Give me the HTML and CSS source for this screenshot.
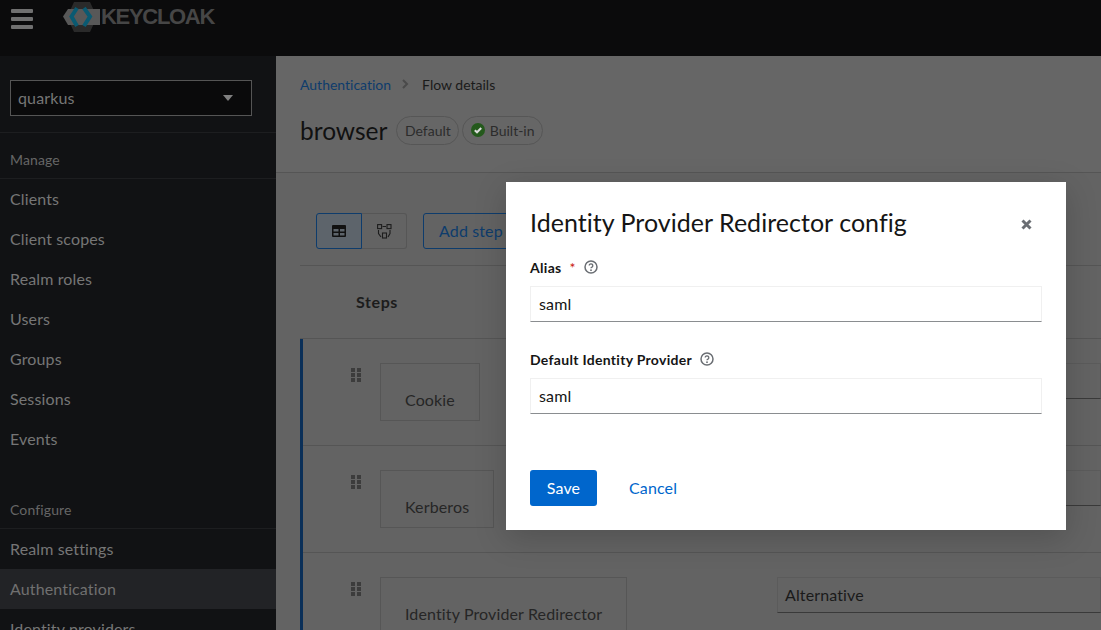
FILE: index.html
```html
<!DOCTYPE html>
<html lang="en">
<head>
<meta charset="utf-8">
<title>Keycloak</title>
<link rel="stylesheet" href="styles.css">
</head>
<body>
<div class="app">
  <header class="masthead">
    <div class="burger"><span></span><span></span><span></span></div>
    <div class="logo">
      <svg class="logo-mark" width="40" height="32" viewBox="0 0 40 32">
        <polygon points="4,16 11,1 27,1 34,16 27,31 11,31" fill="#2a2a2a"/>
        <polygon points="0,15.500 5,8 37,8 37,24 5,24" fill="#585858"/>
        <path d="M14 7 L8.500 15.500 L14 25 M21 7 L27 15.500 L21 25" fill="none" stroke="#0a5a72" stroke-width="4"/>
      </svg>
      <span class="logo-text">KEYCLOAK</span>
    </div>
  </header>
  <div class="body">
    <aside class="sidebar">
      <div class="realm-wrap">
        <div class="realm"><span>quarkus</span><i class="caret"></i></div>
      </div>
      <div class="group-title">Manage</div>
      <nav class="nav">
        <a>Clients</a><a>Client scopes</a><a>Realm roles</a><a>Users</a><a>Groups</a><a>Sessions</a><a>Events</a>
      </nav>
      <div class="group-title">Configure</div>
      <nav class="nav">
        <a>Realm settings</a><a class="current">Authentication</a><a>Identity providers</a>
      </nav>
    </aside>
    <main class="content">
      <section class="head">
        <div class="crumbs"><a>Authentication</a><svg class="chev" width="8" height="10" viewBox="0 0 8 10"><path d="M2 1 L6 5 L2 9" fill="none" stroke="#4a4a4a" stroke-width="2"/></svg><span>Flow details</span></div>
        <div class="title-row">
          <h1>browser</h1>
          <span class="pill">Default</span>
          <span class="pill"><svg width="14" height="14" viewBox="0 0 14 14"><circle cx="7" cy="7" r="7" fill="#24591c"/><path d="M3.800 7.200 L6 9.300 L10.200 5" fill="none" stroke="#dcdcdc" stroke-width="2"/></svg>Built-in</span>
        </div>
      </section>
      <section class="tools">
        <div class="toolbar">
          <div class="toggle">
            <button class="tg on"><svg width="14" height="12" viewBox="0 0 14 12"><path fill="#111" d="M1 0h12a1 1 0 0 1 1 1v10a1 1 0 0 1-1 1H1a1 1 0 0 1-1-1V1a1 1 0 0 1 1-1zm.500 4v2.500h5V4zm6.500 0v2.500h4.500V4zM1.500 8v2.500h5V8zM8 8v2.500h4.500V8z" fill-rule="evenodd"/></svg></button>
            <button class="tg"><svg width="15" height="15" viewBox="0 0 15 15"><g fill="none" stroke="#1d1d1d" stroke-width="1.100"><rect x=".6" y=".6" width="4" height="4"/><rect x="10" y=".6" width="4" height="4"/><rect x="5.500" y="9" width="4" height="5"/><path d="M5.500 2.500h3.500M1.500 6v3.500l2.500 3.500M13 6v3.500l-2 3.500"/></g></svg></button>
          </div>
          <button class="add">Add step</button>
        </div>
        <div class="table-head">Steps</div>
        <div class="rows">
          <div class="row">
            <svg class="grip" width="10" height="14" viewBox="0 0 10 14"><path fill="#3c3c3c" d="M0 0h4v4H0zM6 0h4v4H6zM0 5h4v4H0zM6 5h4v4H6zM0 10h4v4H0zM6 10h4v4H6z"/></svg>
            <div class="step">Cookie</div>
            <div class="req"></div>
          </div>
          <div class="row">
            <svg class="grip" width="10" height="14" viewBox="0 0 10 14"><path fill="#3c3c3c" d="M0 0h4v4H0zM6 0h4v4H6zM0 5h4v4H0zM6 5h4v4H6zM0 10h4v4H0zM6 10h4v4H6z"/></svg>
            <div class="step">Kerberos</div>
            <div class="req"></div>
          </div>
          <div class="row">
            <svg class="grip" width="10" height="14" viewBox="0 0 10 14"><path fill="#3c3c3c" d="M0 0h4v4H0zM6 0h4v4H6zM0 5h4v4H0zM6 5h4v4H6zM0 10h4v4H0zM6 10h4v4H6z"/></svg>
            <div class="step">Identity Provider Redirector</div>
            <div class="req">Alternative</div>
          </div>
        </div>
      </section>
    </main>
  </div>
  <div class="modal">
    <div class="modal-head">
      <h2>Identity Provider Redirector config</h2>
      <svg class="close" width="11" height="11" viewBox="0 0 11 11"><path d="M1.500 1.500 L9.500 9.500 M9.500 1.500 L1.500 9.500" stroke="#6a6e73" stroke-width="3"/></svg>
    </div>
    <div class="field">
      <div class="label"><b>Alias</b><em>*</em><svg class="help" width="14" height="14" viewBox="0 0 14 14"><circle cx="7" cy="7" r="6" fill="none" stroke="#6a6e73" stroke-width="1.500"/><path d="M5.200 5.600a1.800 1.700 0 1 1 2.700 1.500c-.6.300-.9.600-.9 1.200" fill="none" stroke="#6a6e73" stroke-width="1.300"/><circle cx="7" cy="10.200" r=".9" fill="#6a6e73"/></svg></div>
      <div class="input">saml</div>
    </div>
    <div class="field">
      <div class="label"><b>Default Identity Provider</b><svg class="help" width="14" height="14" viewBox="0 0 14 14"><circle cx="7" cy="7" r="6" fill="none" stroke="#6a6e73" stroke-width="1.500"/><path d="M5.200 5.600a1.800 1.700 0 1 1 2.700 1.500c-.6.300-.9.600-.9 1.200" fill="none" stroke="#6a6e73" stroke-width="1.300"/><circle cx="7" cy="10.200" r=".9" fill="#6a6e73"/></svg></div>
      <div class="input">saml</div>
    </div>
    <div class="actions">
      <button class="save">Save</button>
      <button class="cancel">Cancel</button>
    </div>
  </div>
</div>
</body>
</html>
```
FILE: styles.css
```css
* { box-sizing: border-box; }
html, body { margin: 0; height: 100%; overflow: hidden; }
body { font-family: Lato, "Liberation Sans", sans-serif; font-size: 16px; letter-spacing: .13px; font-variant-ligatures: none; background: #626262; color: #1a1a1a; }
.app { width: 1101px; height: 630px; display: flex; flex-direction: column; overflow: hidden; position: relative; }
.masthead { height: 56px; flex: none; background: #0b0b0c; display: flex; align-items: flex-start; }
.burger { margin: 9px 0 0 11px; width: 22px; display: flex; flex-direction: column; gap: 4px; }
.burger span { display: block; height: 4px; background: #707070; border-radius: 1px; }
.logo { margin: 1px 0 0 30px; display: flex; align-items: center; height: 32px; }
.logo-mark { margin-right: -2px; }
.logo-text { font-family: "Liberation Sans", sans-serif; font-weight: 700; font-size: 22px; color: #464646; letter-spacing: -1.300px; }
.body { flex: 1; display: flex; min-height: 0; }
.sidebar { width: 276px; flex: none; background: #111214; color: #767676; }
.realm-wrap { padding: 24px 24px 16px 10px; border-bottom: 1px solid #1d1e20; }
.realm { height: 36px; border: 1px solid #555; background: #0a0a0b; display: flex; align-items: center; justify-content: space-between; padding: 0 18px 1px 7px; color: #767676; }
.caret { width: 0; height: 0; border: 5px solid transparent; border-top: 6px solid #808080; border-bottom: 0; }
.group-title { font-size: 14px; color: #666; padding: 17px 10px 0; height: 46px; line-height: 20px; border-bottom: 1px solid #1d1e20; }
.nav { display: flex; flex-direction: column; margin-bottom: 24px; }
.nav a { height: 40px; line-height: 40px; padding: 0 10px; color: #767676; }
.nav a.current { background: #222326; color: #707070; }
.content { flex: 1; min-width: 0; background: #636363; }
.head { height: 117px; padding: 18px 24px 0; border-bottom: 1px solid #555; background: #666; }
.crumbs { display: flex; align-items: center; font-size: 14px; height: 20px; letter-spacing: 0; }
.crumbs a { color: #0e3c6c; }
.chev { margin: 0 13px 0 10px; }
.title-row { display: flex; align-items: center; margin-top: 20px; height: 32px; gap: 3px; }
h1 { font-size: 24.500px; font-weight: 400; margin: 0 6px 0 0; color: #111; letter-spacing: 0; }
.pill { height: 29px; display: inline-flex; align-items: center; gap: 5px; padding: 0 7.500px; border: 1px solid #565656; border-radius: 15px; font-size: 14px; letter-spacing: 0; color: #2c2c2c; }
.tools { padding: 40px 0 0 24px; }
.toolbar { display: flex; gap: 16px; height: 53px; border-bottom: 1px solid #555; align-items: flex-start; padding-left: 16px; }
.toggle { display: flex; }
button { font: inherit; letter-spacing: inherit; background: none; border: 0; padding: 0; }
.tg { width: 46px; height: 36px; border: 1px solid #565656; display: flex; align-items: center; justify-content: center; }
.tg.on { border-color: #0e3c6c; background: #5d646b; border-radius: 3px 0 0 3px; }
.tg:last-child { border-left: 0; border-radius: 0 3px 3px 0; width: 45px; }
.add { height: 36px; width: 200px; border: 1px solid #0e3c6c; border-radius: 3px; color: #0e3c6c; text-align: left; padding: 0 0 2px 15px; }
.table-head { height: 73px; line-height: 71px; padding-left: 56px; font-weight: 700; letter-spacing: .6px; color: #1c1c1c; border-bottom: 1px solid #555; }
.rows { border-left: 3px solid #0a2f58; }
.row { display: grid; grid-template-columns: 10px 1fr 324px; column-gap: 19px; align-items: start; border-bottom: 1px solid #555; height: 107px; padding: 24px 0 0 48px; }
.row:last-child { border-bottom: 0; }
.grip { margin-top: 5px; }
.step { justify-self: start; height: 58px; border: 1px solid #565656; padding: 26px 24px 0; line-height: 20px; white-space: nowrap; color: #262626; }
.req { height: 36px; border: 1px solid #5b5b5b; border-bottom-color: #3a3a3a; padding: 0 7px; line-height: 34px; color: #1a1a1a; }
.modal { position: absolute; left: 506px; top: 182px; width: 560px; height: 348px; background: #fff; box-shadow: 0 8px 30px rgba(0,0,0,.18); padding: 24px; display: flex; flex-direction: column; }
.modal-head { display: flex; align-items: flex-start; justify-content: space-between; height: 34px; }
.modal-head h2 { margin: 0; font-size: 25px; font-weight: 400; line-height: 32px; letter-spacing: .03px; color: #151515; }
.close { margin: 13px 10px 0 0; }
.field { margin-top: 17px; }
.field + .field { margin-top: 27px; }
.label { display: flex; align-items: center; height: 20px; font-size: 14px; letter-spacing: .3px; margin-bottom: 9px; }
.label b { font-weight: 700; color: #151515; }
.label em { font-style: normal; color: #c9190b; margin-left: 8px; }
.help { margin-left: 8px; }
.input { height: 36px; border: 1px solid #f0f0f0; border-bottom-color: #8a8d90; padding: 0 8px; line-height: 34px; color: #151515; }
.actions { display: flex; align-items: center; gap: 8px; margin-top: auto; }
.save { height: 36px; width: 67px; background: #06c; color: #fff; border-radius: 3px; padding-bottom: 1px; }
.cancel { height: 36px; padding: 0 24px 2px; color: #06c; }
```
